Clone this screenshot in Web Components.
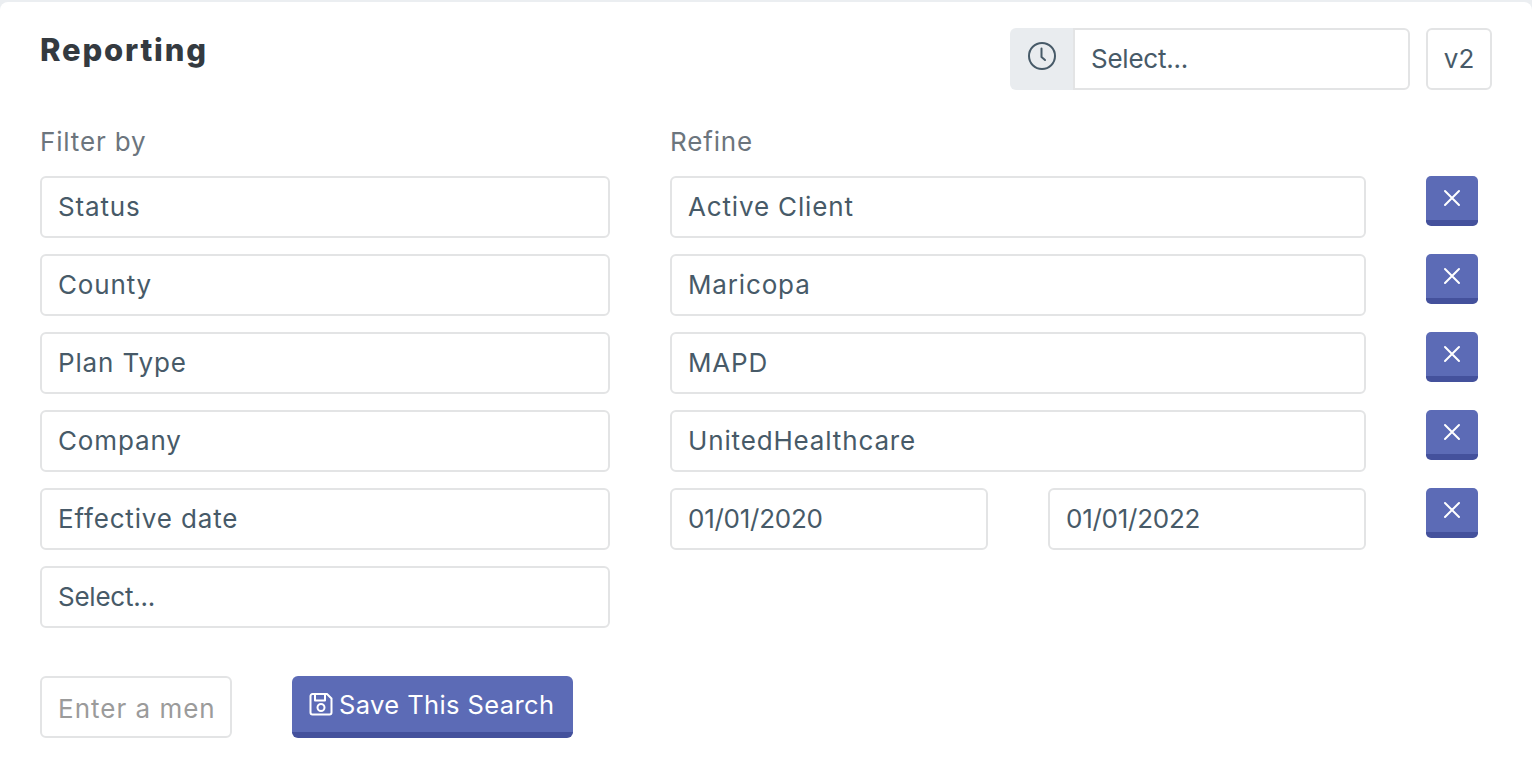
<!DOCTYPE html>
<html><head><meta charset="utf-8"><style>
html,body{margin:0;padding:0;background:#ebeef1;height:100%;overflow:hidden}
body{font-family:Inter,"Open Sans","Liberation Sans",sans-serif}
</style></head><body>
<report-card>
<report-header title-text="Reporting"></report-header>
<filter-grid>
<filter-row filter="Status" refine="Active Client"></filter-row>
<filter-row filter="County" refine="Maricopa"></filter-row>
<filter-row filter="Plan Type" refine="MAPD"></filter-row>
<filter-row filter="Company" refine="UnitedHealthcare"></filter-row>
<filter-row filter="Effective date" from="01/01/2020" to="01/01/2022"></filter-row>
<filter-row filter="Select..." tight></filter-row>
</filter-grid>
<save-bar></save-bar>
</report-card>
<script>
class ReportCard extends HTMLElement{constructor(){super();this.attachShadow({mode:'open'}).innerHTML=`<style>
:host{display:block;box-sizing:border-box;margin-top:2px;height:760px;background:#fff;border-radius:8px 8px 0 0;padding:26px 40px 0}
</style><slot></slot>`}}
class TextBox extends HTMLElement{constructor(){super();this.attachShadow({mode:'open'}).innerHTML=`<style>
:host{display:flex;align-items:center;box-sizing:border-box;height:62px;border:2px solid #e3e4e5;border-radius:6px;padding:0 16px 2px;background:#fff;white-space:nowrap;overflow:hidden;font-size:26px;letter-spacing:.85px;color:#475a68}
:host([tight]){letter-spacing:-.25px}
:host([placeholder]){color:#9b9b9b;letter-spacing:1px;padding:2px 0 0 16px}
</style><slot></slot>`}}
customElements.define('text-box',TextBox);
class XButton extends HTMLElement{constructor(){super();this.attachShadow({mode:'open'}).innerHTML=`<style>
:host{display:flex;justify-content:center;box-sizing:border-box;width:52px;height:50px;background:#5c6bb6;border-bottom:6px solid #44519c;border-radius:5px;padding-top:13px}
svg{display:block}
</style><svg width="18" height="18" viewBox="0 0 18 18" fill="none" stroke="#fff" stroke-width="2" stroke-linecap="round"><path d="M2 2 16 16M16 2 2 16"/></svg>`}}
customElements.define('x-button',XButton);
class ReportHeader extends HTMLElement{constructor(){super();this.attachShadow({mode:'open'}).innerHTML=`<style>
:host{display:flex;align-items:flex-start;height:62px}
h1{margin:0;flex:1;font-size:31px;font-weight:800;letter-spacing:1.8px;color:#343a40;line-height:43px}
.group{display:flex;width:400px;height:62px;margin-right:16px}
.addon{display:flex;align-items:center;justify-content:center;width:63px;box-sizing:border-box;background:#e9ecef;border-radius:6px 0 0 6px;padding-bottom:6px}
.sel{flex:1;border-radius:0 6px 6px 0}
.v{width:66px;padding:0 0 2px;justify-content:center;letter-spacing:0}
</style><h1></h1><div class="group"><div class="addon"><svg width="28" height="28" viewBox="0 0 28 28" fill="none" stroke="#475a68" stroke-width="2" stroke-linecap="round" stroke-linejoin="round"><circle cx="14" cy="14" r="13"/><path d="M13.500 6.500V15L17 18"/></svg></div><text-box class="sel" tight>Select...</text-box></div><text-box class="v">v2</text-box>`;
this.shadowRoot.querySelector('h1').textContent=this.getAttribute('title-text')}}
class FilterGrid extends HTMLElement{constructor(){super();this.attachShadow({mode:'open'}).innerHTML=`<style>
:host{display:block}
.labels{display:grid;grid-template-columns:570px 696px;column-gap:60px;margin-top:32px;margin-bottom:14px;font-size:26px;letter-spacing:.85px;line-height:40px;color:#6c757d;height:40px}
.rows{display:flex;flex-direction:column;gap:16px}
</style><div class="labels"><div>Filter by</div><div>Refine</div></div><div class="rows"><slot></slot></div>`}}
class FilterRow extends HTMLElement{constructor(){super();const a=n=>this.getAttribute(n);
let r='';
if(a('refine'))r=`<text-box>${a('refine')}</text-box><x-button></x-button>`;
else if(a('from'))r=`<div class="dates"><text-box tight>${a('from')}</text-box><text-box tight>${a('to')}</text-box></div><x-button></x-button>`;
this.attachShadow({mode:'open'}).innerHTML=`<style>
:host{display:grid;grid-template-columns:570px 696px 52px;column-gap:60px;height:62px;align-items:start}
.dates{display:grid;grid-template-columns:318px 318px;column-gap:60px}
</style><text-box ${this.hasAttribute('tight')?'tight':''}>${a('filter')}</text-box>${r}`}}
class SaveBar extends HTMLElement{constructor(){super();this.attachShadow({mode:'open'}).innerHTML=`<style>
:host{display:flex;gap:60px;margin-top:48px}
text-box{width:192px}
button{display:flex;align-items:center;gap:6px;box-sizing:border-box;width:281px;height:62px;padding:0 0 0 17px;border:0;border-bottom:6px solid #44519c;border-radius:6px;background:#5c6bb6;color:#fff;font:inherit;font-size:25.500px;letter-spacing:.4px;white-space:nowrap}
svg{flex:none}
</style><text-box placeholder>Enter a men</text-box><button><svg width="24" height="24" viewBox="0 0 24 24" fill="none" stroke="#fff" stroke-width="2" stroke-linejoin="round"><path d="M3.500 2H18L22.500 6.500V20.500A2 2 0 0 1 20.500 22.500H3.500A2 2 0 0 1 1.500 20.500V4A2 2 0 0 1 3.500 2Z"/><path d="M6 2V8.500H16V2"/><circle cx="12" cy="15.500" r="3.500"/></svg><span>Save This Search</span></button>`}}
customElements.define('report-card',ReportCard);
customElements.define('report-header',ReportHeader);
customElements.define('filter-grid',FilterGrid);
customElements.define('filter-row',FilterRow);
customElements.define('save-bar',SaveBar);
</script>
</body></html>
